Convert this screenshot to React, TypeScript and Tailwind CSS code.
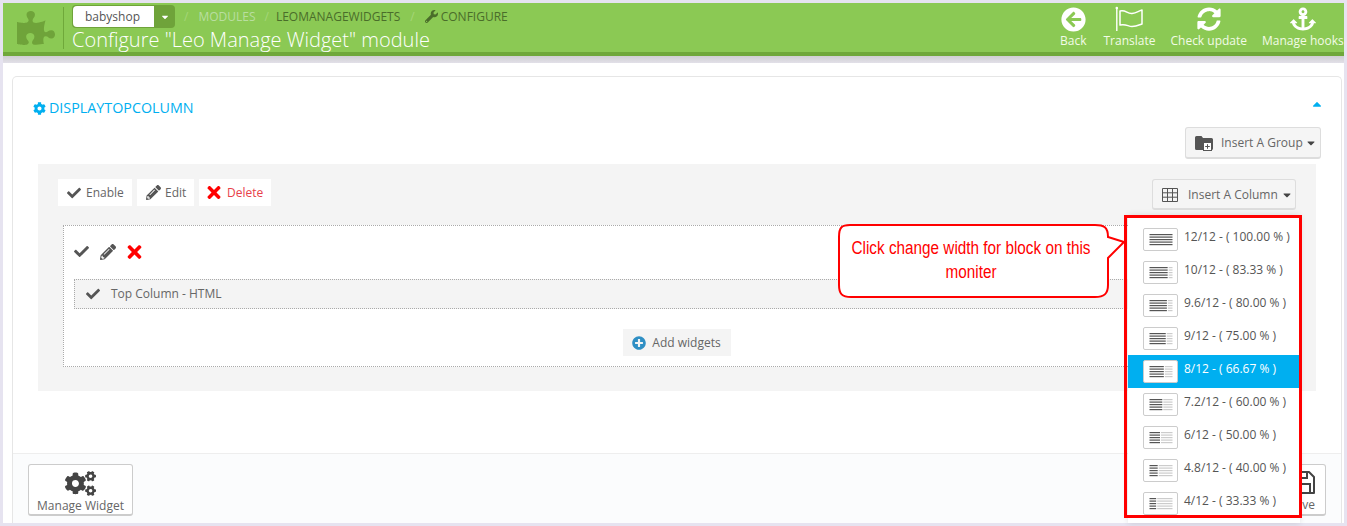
import { FaAnchor, FaArrowCircleLeft, FaCaretDown, FaCaretUp, FaCheck, FaCog, FaCogs, FaPencilAlt, FaPlusCircle, FaPuzzlePiece, FaSyncAlt, FaTimes, FaWrench } from "react-icons/fa";

const columns = [
  { label: "12/12 - ( 100.00 % )", pct: 100 },
  { label: "10/12 - ( 83.33 % )", pct: 83.33 },
  { label: "9.6/12 - ( 80.00 % )", pct: 80 },
  { label: "9/12 - ( 75.00 % )", pct: 75 },
  { label: "8/12 - ( 66.67 % )", pct: 66.67, active: true },
  { label: "7.2/12 - ( 60.00 % )", pct: 60 },
  { label: "6/12 - ( 50.00 % )", pct: 50 },
  { label: "4.8/12 - ( 40.00 % )", pct: 40 },
  { label: "4/12 - ( 33.33 % )", pct: 33.33 },
];

function WidthIcon({ pct }: { pct: number }) {
  const dark = (23 * pct) / 100 - (pct < 100 ? 1 : 0);
  return (
    <span className="flex h-[23px] w-[35px] shrink-0 items-center justify-center rounded-[2px] border border-[#ccc] bg-white">
      <svg width="24" height="13" viewBox="0 0 24 13">
        {[1, 3.5, 6, 8.5, 11].map((y) => (
          <g key={y}>
            <rect x={dark + 1.5} y={y} width={Math.max(22 - dark, 0)} height="1.2" fill="#ccc" />
            <rect x="0.5" y={y} width={dark} height="1.2" fill="#555" />
          </g>
        ))}
      </svg>
    </span>
  );
}

function ToolbarItem({ icon, label }: { icon: React.ReactNode; label: string }) {
  return (
    <div className="flex flex-col items-center">
      <div className="flex h-[26px] items-center justify-center text-white">{icon}</div>
      <span className="mt-[1px] whitespace-nowrap text-[12px] leading-[16px] text-[#f2fbe6]">{label}</span>
    </div>
  );
}

function FlagIcon() {
  return (
    <svg width="28" height="26" viewBox="0 0 28 26" fill="none" stroke="#fff">
      <circle cx="1.800" cy="2" r="1.300" fill="#fff" stroke="none" />
      <path d="M1.800 2v23" strokeWidth="1.400" />
      <path d="M5 5c6-1.500 7 3 12 2.500s6-2.500 10-3.500v14c-4 1.500-6 2.500-10 2.500s-6-3-12-1.500z" strokeWidth="1.500" strokeLinejoin="round" />
    </svg>
  );
}

function GroupIcon() {
  return (
    <svg width="18" height="16" viewBox="0 0 18 16" className="shrink-0">
      <path d="M0 2.500a1.500 1.500 0 0 1 1.500-1.500h5l1.500 2h8.500a1.500 1.500 0 0 1 1.500 1.500v9a1.500 1.500 0 0 1-1.500 1.500h-15a1.500 1.500 0 0 1-1.500-1.500z" fill="#555" />
      <rect x="8.500" y="7.500" width="8" height="8" fill="#fff" stroke="#555" />
      <path d="M12.500 9.200v4.600M10.200 11.500h4.600" stroke="#555" />
    </svg>
  );
}

function GridIcon() {
  return (
    <svg width="16" height="14" viewBox="0 0 16 14" fill="none" stroke="#555" className="shrink-0">
      <path d="M.5.500h15v13h-15zM.5 4.800h15M.5 9.200h15M5.500.500v13M10.500.500v13" />
    </svg>
  );
}

function SaveIcon() {
  return (
    <svg width="23" height="23" viewBox="0 0 23 23" fill="none" stroke="#444" strokeWidth="2">
      <path d="M2 1h15l5 5v16H1V2z" strokeLinejoin="round" />
      <path d="M6 1v6h9V1M5 22v-9h13v9" />
    </svg>
  );
}

function Callout() {
  return (
    <div className="absolute left-[838px] top-[224px] h-[74px] w-[290px] text-[#f00]">
      <svg width="290" height="74" viewBox="0 0 290 74" fill="#fff" stroke="#f00" strokeWidth="2" className="absolute inset-0">
        <path d="M12 1h245c9 0 13 2 13 12l16 5-16 16v27c0 9-4 12-13 12H13c-9 0-12-3-12-12V13C1 3 4 1 12 1z" />
      </svg>
      <p className="relative -ml-[8px] w-[282px] origin-center scale-x-[0.85] whitespace-nowrap pt-[12px] text-center font-['Liberation_Sans',sans-serif] text-[18px] leading-[24px]">
        Click change width for block on this
        <br />
        moniter
      </p>
    </div>
  );
}

function ColumnMenu() {
  return (
    <div className="absolute left-[1124px] top-[215px] h-[308px] w-[178px]">
      <div className="ml-[4px] mr-[2px] h-full bg-white pt-[8px] shadow-[0_0_6px_rgba(0,0,0,0.12)]">
        {columns.map((col) => (
          <div key={col.label} className={`flex h-[33px] items-start gap-[6px] pl-[15px] pt-[4px] text-[12px] leading-[20px] ${col.active ? "bg-[#00aff0] text-white" : "text-[#555]"}`}>
            <span className="mt-[1px]">
              <WidthIcon pct={col.pct} />
            </span>
            <span className="whitespace-nowrap">{col.label}</span>
          </div>
        ))}
      </div>
      <div className="absolute left-0 top-0 h-[303px] w-[178px] border-[3px] border-[#f00]" />
    </div>
  );
}

export default function App() {
  return (
    <div className="relative h-[526px] w-[1347px] overflow-hidden bg-[#e6e3f0] p-[3px] font-['Open_Sans',sans-serif] text-[12px] text-[#666]">
      <div className="flex h-full flex-col">
        <header className="flex h-[53px] shrink-0 items-start justify-between overflow-hidden border-b-[4px] border-[#6fa83a] bg-[#8bc954]">
          <div className="flex items-start">
            <div className="flex h-[49px] w-[60px] items-center justify-center">
              <FaPuzzlePiece className="ml-[5px] h-[38px] w-[38px] text-[#6fa33a]" />
            </div>
            <div className="mt-[4px] h-[42px] w-px bg-[#6fa83a]" />
            <div className="ml-[8px] pt-[2px]">
              <div className="flex h-[23px] items-center">
                <div className="flex h-[23px] w-[103px] overflow-hidden rounded-[4px] bg-[#6fa33a]">
                  <span className="my-[1px] ml-px w-[81px] rounded-l-[4px] bg-white pl-[12px] text-[12px] leading-[21px] text-[#555]">babyshop</span>
                  <span className="flex flex-1 items-center justify-center text-white">
                    <FaCaretDown className="h-[10px] w-[10px]" />
                  </span>
                </div>
                <span className="ml-[9px] text-[#a5d678]">/</span>
                <span className="ml-[10px] text-[#b9dea0]">MODULES</span>
                <span className="ml-[9px] text-[#a5d678]">/</span>
                <span className="ml-[7px] text-[#4a6d2a]">LEOMANAGEWIDGETS</span>
                <span className="ml-[10px] text-[#a5d678]">/</span>
                <FaWrench className="ml-[10px] h-[13px] w-[13px] text-[#4a6d2a]" />
                <span className="ml-[3px] text-[#4a6d2a]">CONFIGURE</span>
              </div>
              <h1 className="-mt-[2px] whitespace-nowrap text-[20px] font-light leading-[27px] text-white">Configure "Leo Manage Widget" module</h1>
            </div>
          </div>
          <div className="flex w-[284px] shrink-0 pt-[3px]">
            <ToolbarItem icon={<FaArrowCircleLeft className="h-[25px] w-[25px]" />} label="Back" />
            <div className="ml-[17px]">
              <ToolbarItem icon={<FlagIcon />} label="Translate" />
            </div>
            <div className="ml-[15px]">
              <ToolbarItem icon={<FaSyncAlt className="h-[24px] w-[24px]" />} label="Check update" />
            </div>
            <div className="ml-[15px]">
              <ToolbarItem icon={<FaAnchor className="h-[26px] w-[26px]" />} label="Manage hooks" />
            </div>
          </div>
        </header>
        <div className="h-[7px] shrink-0 bg-gradient-to-b from-[#cfcfd2] to-[#e2e0e8]" />

        <main className="flex min-h-0 flex-1 flex-col bg-white pl-[9px] pr-[2px] pt-[13px]">
          <section className="flex flex-1 flex-col rounded-t-[5px] border border-b-0 border-[#e6e6e6]">
            <div className="flex items-start justify-between px-[20px] pt-[22px]">
              <h2 className="flex items-center gap-[3px] text-[14.3px] leading-[18px] text-[#00aff0]">
                <FaCog className="h-[13px] w-[13px]" /> DISPLAYTOPCOLUMN
              </h2>
              <FaCaretUp className="-mr-[3px] -mt-[2px] h-[14px] w-[14px] text-[#00aff0]" />
            </div>
            <div className="mr-[20px] mt-[10px] flex justify-end">
              <button className="flex h-[32px] w-[136px] items-center gap-[8px] rounded-[3px] border border-b-[2px] border-[#ddd] bg-[#f5f5f5] pl-[9px] text-[12px]">
                <GroupIcon />
                <span>Insert A Group</span>
                <FaCaretDown className="-ml-[6px] h-[12px] w-[12px] text-[#444]" />
              </button>
            </div>

            <div className="mx-[25px] mt-[5px] h-[227px] bg-[#f4f4f4] px-[20px] pt-[15px]">
              <div className="flex items-start justify-between">
                <div className="flex gap-[5px]">
                  <button className="flex h-[27px] w-[74px] items-center gap-[5px] bg-white pl-[9px] text-[12px]"><FaCheck className="h-[14px] w-[14px] text-[#555]" />Enable</button>
                  <button className="flex h-[27px] w-[57px] items-center gap-[4px] bg-white pl-[9px] text-[12px]"><FaPencilAlt className="h-[15px] w-[15px] text-[#555]" />Edit</button>
                  <button className="flex h-[27px] w-[72px] items-center gap-[6px] bg-white pl-[8px] text-[12px] text-[#e8404a]"><FaTimes className="h-[19px] w-[14px] text-[#f00]" />Delete</button>
                </div>
                <button className="flex h-[31px] w-[144px] items-center gap-[10px] rounded-[3px] border border-b-[2px] border-[#ddd] bg-[#f5f5f5] pl-[9px] pt-[1px] text-[12px]">
                  <GridIcon />
                  <span>Insert A Column</span>
                  <FaCaretDown className="-ml-[7px] h-[12px] w-[12px] text-[#444]" />
                </button>
              </div>
              <div className="ml-[5px] mr-[6px] mt-[15px] h-[142px] border border-dotted border-[#aaa] bg-white px-[10px]">
                <div className="flex h-[53px] items-center gap-[11px] pb-[2px] text-[#555]">
                  <FaCheck className="h-[15px] w-[15px]" />
                  <FaPencilAlt className="h-[16px] w-[16px]" />
                  <FaTimes className="h-[20px] w-[15px] text-[#f00]" />
                </div>
                <div className="flex h-[30px] items-center gap-[11px] border border-dotted border-[#aaa] bg-[#f4f4f4] pl-[11px] text-[12px]">
                  <FaCheck className="h-[14px] w-[14px] text-[#555]" />
                  Top Column - HTML
                </div>
                <div className="mt-[20px] flex justify-center">
                  <button className="flex h-[27px] w-[108px] items-center justify-center gap-[6px] bg-[#f4f4f4] text-[12px]">
                    <FaPlusCircle className="h-[14px] w-[14px] text-[#2f8fc4]" />
                    Add widgets
                  </button>
                </div>
              </div>
            </div>

            <div className="mt-[62px] flex flex-1 items-start justify-between border-t border-[#eee] bg-[#fbfcfd] px-[15px] pt-[10px]">
              <button className="flex h-[52px] w-[105px] flex-col items-center rounded-[3px] border border-b-[2px] border-[#ccc] bg-white pt-[4px] text-[12px] leading-[16px]">
                <FaCogs className="h-[30px] w-[31px] text-[#444]" />
                Manage Widget
              </button>
              <button className="flex h-[52px] w-[62px] flex-col items-end justify-between rounded-[3px] border border-b-[2px] border-[#ccc] bg-white pb-[1px] pr-[10px] pt-[6px] text-[12px] leading-[16px]">
                <SaveIcon />
                Save
              </button>
            </div>
          </section>
        </main>
      </div>
      <Callout />
      <ColumnMenu />
    </div>
  );
}
